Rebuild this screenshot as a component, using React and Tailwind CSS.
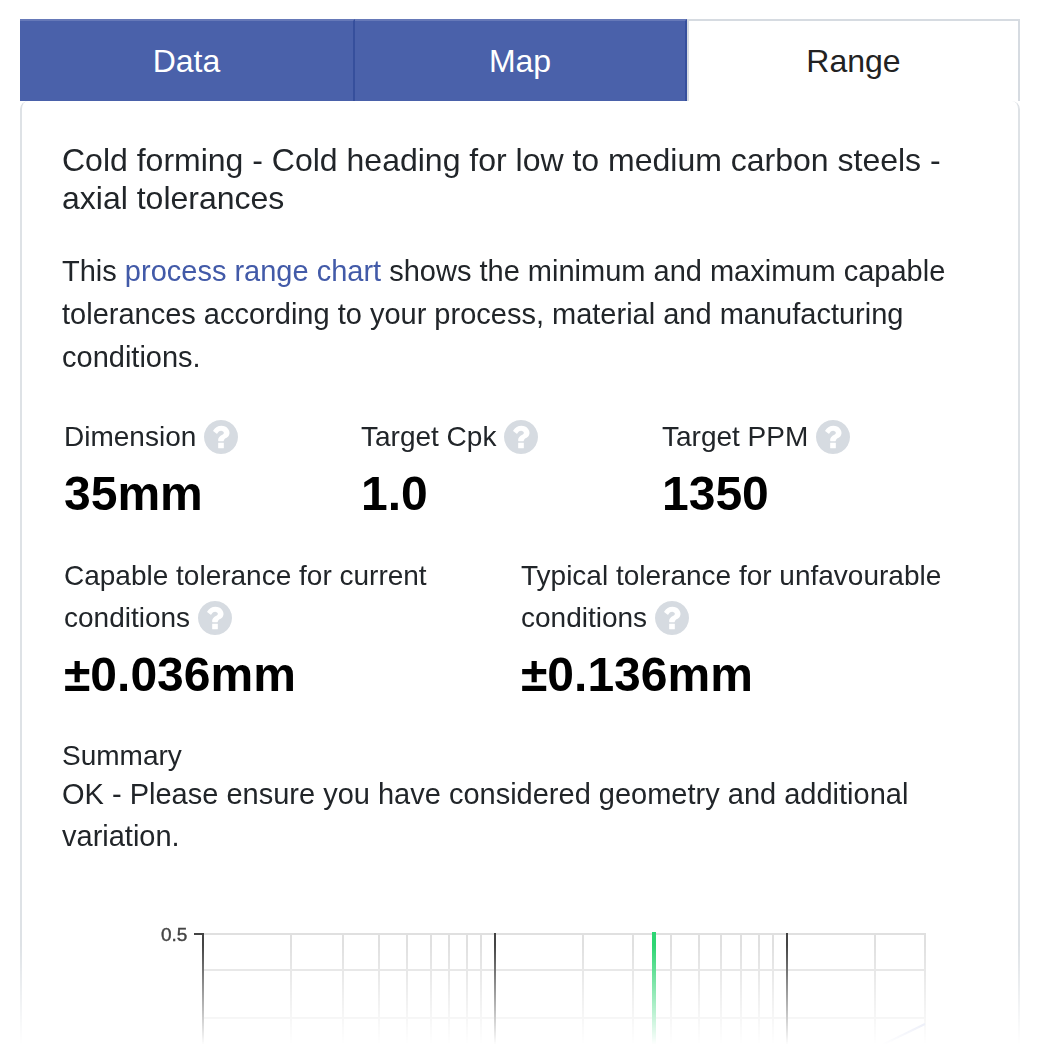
import React from "react";

const TABS = [
  { name: "Data", active: false },
  { name: "Map", active: false },
  { name: "Range", active: true },
];

const MINOR_X = [291, 343, 379, 407, 431, 449, 467, 481, 583, 633, 671, 699, 721, 741, 759, 773, 875, 925];
const MAJOR_X = [203, 495, 787];
const ROW_Y = [933, 969, 1017];

function HelpButton({ label }) {
  return (
    <button type="button" aria-label={`Help: ${label}`} className="ml-2 inline-block align-middle text-[#d6dbe1]">
      <svg viewBox="0 0 1536 1536" className="mb-1 size-[34px] fill-current" aria-hidden="true">
        <path d="M896 1248v-192q0-14-9-23t-23-9H672q-14 0-23 9t-9 23v192q0 14 9 23t23 9h192q14 0 23-9t9-23zm256-672q0-88-55.500-163T958 297t-170-41q-243 0-371 213-15 24 8 42l132 100q7 6 19 6 16 0 25-12 53-68 86-92 34-24 86-24 48 0 85.500 26t37.500 59q0 38-20 61t-68 45q-63 28-115.500 86.500T640 892v36q0 14 9 23t23 9h192q14 0 23-9t9-23q0-19 21.500-49.500T972 829q32-18 49-28.500t46-35 44.500-48 28-60.500 12.500-81zm384 192q0 209-103 385.500T1153.500 1433 768 1536t-385.500-103T103 1153.500 0 768t103-385.500T382.500 103 768 0t385.500 103T1433 382.500 1536 768z" />
      </svg>
    </button>
  );
}

function Stat({ label, value }) {
  return (
    <div>
      <dt className="text-[28px] leading-[42px]">
        {label}
        <HelpButton label={label} />
      </dt>
      <dd className="mt-[7px] text-5xl leading-[58px] font-bold text-black">{value}</dd>
    </div>
  );
}

function RangeChart() {
  return (
    <svg viewBox="62 920 916 124" className="mt-16 block w-full" role="img" aria-label="Process range chart">
      <text x="161" y="940" fontSize="19" fill="#444" stroke="#444" strokeWidth="0.4">0.5</text>
      <g stroke="#e0e0e0" strokeWidth="2">
        {MINOR_X.map((x) => (
          <line key={x} x1={x} x2={x} y1="933" y2="1044" />
        ))}
        {ROW_Y.map((y) => (
          <line key={y} x1="203" x2="926" y1={y} y2={y} />
        ))}
      </g>
      <g stroke="#444" strokeWidth="2">
        <line x1="194" x2="204" y1="933" y2="933" />
        {MAJOR_X.map((x) => (
          <line key={x} x1={x} x2={x} y1="932" y2="1044" />
        ))}
      </g>
      <line x1="654" x2="654" y1="931" y2="1044" stroke="#2ed573" strokeWidth="4" />
      <line x1="880" x2="925" y1="1045" y2="1023" stroke="#a9b4e0" strokeWidth="2" />
    </svg>
  );
}

export default function App() {
  return (
    <main className="bg-white pt-[19px] pr-6 pl-5 font-['Liberation_Sans',Arial,sans-serif] text-[#212529]">
      <div role="tablist" className="grid grid-cols-[335fr_332fr_333fr] text-[32px] leading-[38px]">
        {TABS.map((tab) => (
          <button
            key={tab.name}
            type="button"
            role="tab"
            aria-selected={tab.active}
            className={
              tab.active
                ? "border-2 border-b-0 border-[#d6dbe1] bg-white pt-[21px] pb-[21px] text-[#222]"
                : "border-t-2 border-r-2 border-t-[#6679b8] border-r-[#364f9c] bg-[#4a61aa] pt-[21px] pb-[21px] text-white"
            }
          >
            {tab.name}
          </button>
        ))}
      </div>
      <section className="rounded-t-lg border-x-2 border-[#dee2e6] mask-[linear-gradient(to_top,transparent_0px,black_100px)] px-10 pt-10">
        <h1 className="text-[32px] leading-[38px]">
          Cold forming - Cold heading for low to medium carbon steels - axial tolerances
        </h1>
        <p className="mt-[33px] text-[29px] leading-[43px]">
          This <a href="#chart" className="text-[#425aa8]">process range chart</a> shows the minimum and maximum capable
          tolerances according to your process, material and manufacturing conditions.
        </p>
        <dl className="mt-[37px] grid grid-cols-[297fr_301fr_314fr] px-0.5">
          <Stat label="Dimension" value="35mm" />
          <Stat label="Target Cpk" value="1.0" />
          <Stat label="Target PPM" value="1350" />
        </dl>
        <dl className="mt-8 grid grid-cols-2 pl-0.5">
          <Stat label="Capable tolerance for current conditions" value="±0.036mm" />
          <Stat label="Typical tolerance for unfavourable conditions" value="±0.136mm" />
        </dl>
        <h2 className="mt-[34px] text-[28px] leading-[35px]">Summary</h2>
        <p className="text-[29px] leading-[42px]">
          OK - Please ensure you have considered geometry and additional variation.
        </p>
        <div id="chart">
          <RangeChart />
        </div>
      </section>
    </main>
  );
}
